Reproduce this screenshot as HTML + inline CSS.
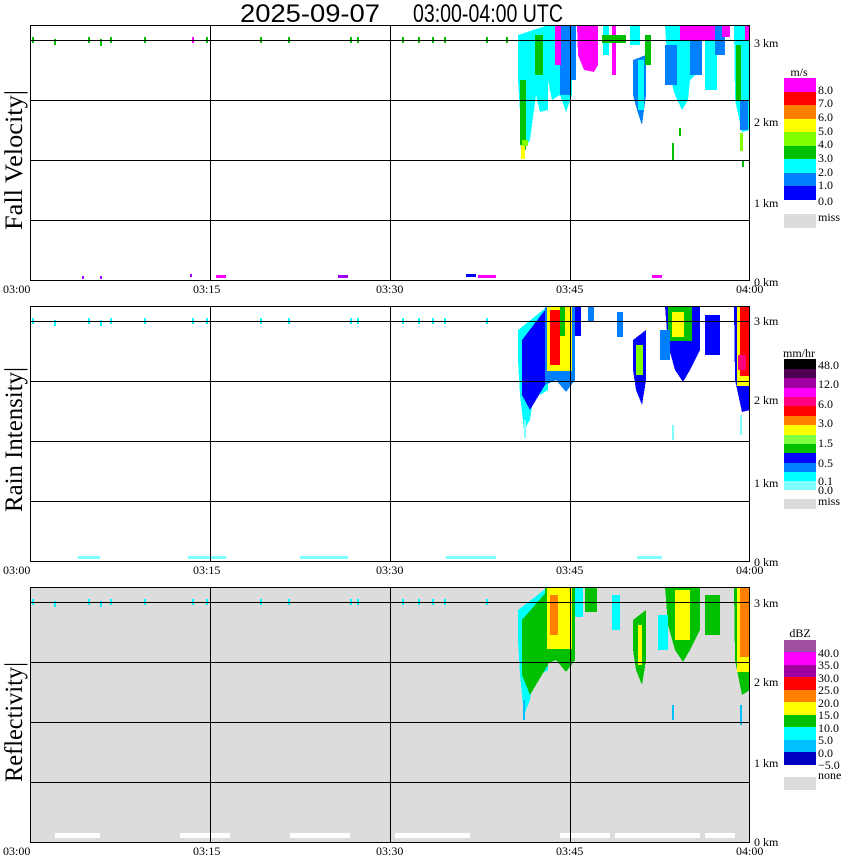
<!DOCTYPE html>
<html><head><meta charset="utf-8"><style>
html,body{margin:0;padding:0;background:#fff;width:850px;height:868px;overflow:hidden}
svg{display:block}
.t{font-family:"Liberation Serif",serif;font-size:12px;fill:#000}
.lg{font-family:"Liberation Serif",serif;font-size:12px;fill:#000}
.yl{font-family:"Liberation Serif",serif;font-size:25px;fill:#000}
</style></head><body>
<svg width="850" height="868" viewBox="0 0 850 868" xmlns="http://www.w3.org/2000/svg" shape-rendering="crispEdges">
<text x="240" y="22" font-family="Liberation Sans,sans-serif" font-size="25" textLength="140" lengthAdjust="spacingAndGlyphs">2025-09-07</text>
<text x="413" y="22" font-family="Liberation Sans,sans-serif" font-size="25" textLength="150" lengthAdjust="spacingAndGlyphs">03:00-04:00 UTC</text>

<!-- PANEL 3 gray background -->
<rect x="30" y="587" width="720" height="255" fill="#dcdcdc"/>
<g fill="#fff">
<rect x="55" y="833" width="45" height="5"/><rect x="180" y="833" width="50" height="5"/><rect x="290" y="833" width="60" height="5"/>
<rect x="395" y="833" width="75" height="5"/><rect x="560" y="833" width="50" height="5"/><rect x="615" y="833" width="85" height="5"/><rect x="705" y="833" width="30" height="5"/>
</g>

<!-- PANEL 1 data -->
<g>
<polygon fill="#00ffff" points="518,35 548,25 548,110 540,112 536,95 530,140 524,150 520,112 518,80"/>
<polygon fill="#00c000" points="520,80 526,80 526,150 520,145"/>
<rect x="521" y="145" width="4" height="14" fill="#ffff00"/>
<rect x="522" y="140" width="6" height="6" fill="#80ff00"/>
<polygon fill="#00ffff" points="548,25 572,25 572,95 566,112 560,95 552,100 548,80"/>
<rect x="560" y="25" width="10" height="70" fill="#0080ff"/>
<rect x="535" y="35" width="8" height="40" fill="#00c000"/>
<rect x="555" y="25" width="6" height="40" fill="#ff00ff"/>
<rect x="570" y="25" width="6" height="55" fill="#0080ff"/>
<polygon fill="#ff00ff" points="577,25 598,25 598,65 594,72 584,70 578,55"/>
<rect x="603" y="25" width="6" height="30" fill="#00ffff"/>
<rect x="612" y="25" width="4" height="50" fill="#ff00ff"/>
<polygon fill="#0080ff" points="633,60 646,55 646,95 642,125 637,110 633,95"/>
<rect x="638" y="60" width="6" height="50" fill="#00ffff"/>
<rect x="630" y="25" width="10" height="20" fill="#00ffff"/>
<rect x="645" y="35" width="6" height="30" fill="#00c000"/>
<polygon fill="#00ffff" points="665,25 700,25 700,70 690,80 688,100 682,110 675,95 668,70"/>
<rect x="665" y="45" width="12" height="40" fill="#0080ff"/>
<rect x="690" y="35" width="12" height="40" fill="#0080ff"/>
<rect x="680" y="25" width="35" height="15" fill="#ff00ff"/>
<rect x="705" y="40" width="12" height="50" fill="#00ffff"/>
<rect x="715" y="25" width="10" height="30" fill="#0080ff"/>
<rect x="722" y="25" width="8" height="12" fill="#ff00ff"/>
<polygon fill="#00ffff" points="734,25 750,25 750,130 742,132 735,100"/>
<rect x="736" y="45" width="5" height="55" fill="#00c000"/>
<rect x="740" y="100" width="8" height="30" fill="#0080ff"/>
<rect x="745" y="25" width="5" height="15" fill="#ff00ff"/>
<rect x="740" y="133" width="3" height="18" fill="#80ff00"/>
<rect x="742" y="160" width="2" height="7" fill="#00c000"/>
<rect x="672" y="143" width="2" height="17" fill="#00c000"/>
<rect x="679" y="128" width="2" height="8" fill="#00c000"/>
<rect x="602" y="35" width="24" height="8" fill="#00c000"/>
</g>

<!-- PANEL 2 data -->
<g>
<polygon fill="#00ffff" points="518,330 548,306 548,390 540,395 536,380 530,420 524,430 520,395 518,360"/>
<polygon fill="#0000ff" points="522,340 545,310 545,385 530,410 522,395"/>
<polygon fill="#0080ff" points="545,306 575,306 575,380 566,392 556,380 545,385"/>
<rect x="547" y="306" width="25" height="65" fill="#ffff00"/>
<rect x="550" y="310" width="10" height="55" fill="#ff0000"/>
<rect x="560" y="306" width="5" height="30" fill="#00c000"/>
<rect x="575" y="306" width="6" height="30" fill="#0000ff"/>
<rect x="588" y="306" width="6" height="16" fill="#0080ff"/>
<rect x="617" y="312" width="6" height="25" fill="#0080ff"/>
<polygon fill="#0000ff" points="633,340 646,330 646,380 642,405 636,390 633,370"/>
<rect x="636" y="345" width="7" height="30" fill="#80ff00"/>
<polygon fill="#0000ff" points="665,306 700,306 700,350 690,370 683,382 675,370 668,345"/>
<rect x="668" y="306" width="24" height="35" fill="#00c000"/>
<rect x="672" y="312" width="12" height="25" fill="#ffff00"/>
<rect x="705" y="315" width="15" height="40" fill="#0000ff"/>
<rect x="660" y="330" width="10" height="30" fill="#0080ff"/>
<polygon fill="#0000ff" points="734,306 750,306 750,410 742,412 735,380"/>
<rect x="737" y="306" width="13" height="80" fill="#ffff00"/>
<rect x="740" y="306" width="10" height="70" fill="#ff0000"/>
<rect x="738" y="355" width="8" height="15" fill="#ff0080"/>
<rect x="672" y="425" width="2" height="15" fill="#80ffff"/>
<rect x="740" y="415" width="2" height="20" fill="#80ffff"/>
<rect x="524" y="420" width="2" height="18" fill="#80ffff"/>
</g>

<!-- PANEL 3 data -->
<g>
<polygon fill="#00ffff" points="518,610 548,587 548,670 540,675 536,660 530,700 524,715 520,675 518,640"/>
<polygon fill="#00c000" points="522,620 548,590 548,665 530,695 522,675"/>
<polygon fill="#00c000" points="545,587 575,587 575,660 566,672 556,660 545,665"/>
<rect x="547" y="587" width="25" height="62" fill="#ffff00"/>
<rect x="550" y="595" width="8" height="40" fill="#ff8000"/>
<rect x="575" y="587" width="8" height="30" fill="#00ffff"/>
<rect x="585" y="587" width="12" height="25" fill="#00c000"/>
<rect x="612" y="595" width="8" height="35" fill="#00ffff"/>
<polygon fill="#00c000" points="633,620 646,610 646,660 642,685 636,670 633,650"/>
<rect x="638" y="625" width="4" height="40" fill="#ffff00"/>
<polygon fill="#00c000" points="665,587 700,587 700,630 690,650 683,662 675,650 668,625"/>
<rect x="675" y="590" width="15" height="50" fill="#ffff00"/>
<rect x="658" y="615" width="10" height="35" fill="#00ffff"/>
<rect x="705" y="595" width="15" height="40" fill="#00c000"/>
<polygon fill="#00c000" points="734,587 750,587 750,690 742,695 735,660"/>
<rect x="737" y="587" width="13" height="85" fill="#ffff00"/>
<rect x="740" y="587" width="10" height="70" fill="#ff8000"/>
<rect x="672" y="705" width="2" height="15" fill="#00c0ff"/>
<rect x="740" y="705" width="2" height="20" fill="#00c0ff"/>
<rect x="523" y="700" width="2" height="20" fill="#00c0ff"/>
</g>

<!-- tick marks near 3km -->
<g>
<g fill="#00c000">
<rect x="32" y="37" width="2" height="6"/><rect x="54" y="39" width="2" height="6"/><rect x="88" y="37" width="2" height="6"/><rect x="100" y="39" width="2" height="7"/><rect x="110" y="37" width="2" height="6"/><rect x="144" y="37" width="2" height="6"/><rect x="206" y="37" width="2" height="6"/><rect x="260" y="37" width="2" height="6"/><rect x="288" y="37" width="2" height="6"/><rect x="350" y="37" width="2" height="6"/><rect x="357" y="37" width="2" height="6"/><rect x="402" y="37" width="2" height="6"/><rect x="418" y="37" width="2" height="6"/><rect x="432" y="37" width="2" height="6"/><rect x="444" y="37" width="2" height="6"/><rect x="486" y="37" width="2" height="6"/><rect x="506" y="37" width="2" height="6"/>
</g>
<rect x="192" y="37" width="2" height="6" fill="#ff00ff"/>
<g fill="#00ffff">
<rect x="32" y="318" width="2" height="6"/><rect x="54" y="320" width="2" height="6"/><rect x="88" y="318" width="2" height="6"/><rect x="100" y="320" width="2" height="6"/><rect x="110" y="318" width="2" height="6"/><rect x="144" y="318" width="2" height="6"/><rect x="192" y="318" width="2" height="6"/><rect x="206" y="318" width="2" height="6"/><rect x="260" y="318" width="2" height="6"/><rect x="288" y="318" width="2" height="6"/><rect x="350" y="318" width="2" height="6"/><rect x="357" y="318" width="2" height="6"/><rect x="402" y="318" width="2" height="6"/><rect x="418" y="318" width="2" height="6"/><rect x="432" y="318" width="2" height="6"/><rect x="444" y="318" width="2" height="6"/><rect x="486" y="318" width="2" height="6"/>
<rect x="32" y="599" width="2" height="6"/><rect x="54" y="601" width="2" height="6"/><rect x="88" y="599" width="2" height="6"/><rect x="100" y="601" width="2" height="6"/><rect x="110" y="599" width="2" height="6"/><rect x="144" y="599" width="2" height="6"/><rect x="192" y="599" width="2" height="6"/><rect x="206" y="599" width="2" height="6"/><rect x="260" y="599" width="2" height="6"/><rect x="288" y="599" width="2" height="6"/><rect x="350" y="599" width="2" height="6"/><rect x="357" y="599" width="2" height="6"/><rect x="402" y="599" width="2" height="6"/><rect x="418" y="599" width="2" height="6"/><rect x="432" y="599" width="2" height="6"/><rect x="444" y="599" width="2" height="6"/><rect x="486" y="599" width="2" height="6"/>
</g>
<g fill="#80ffff">
<rect x="78" y="556" width="22" height="3"/><rect x="188" y="556" width="38" height="3"/><rect x="300" y="556" width="48" height="3"/><rect x="446" y="556" width="50" height="3"/><rect x="637" y="556" width="25" height="3"/>
</g>
<g fill="#a000ff">
<rect x="82" y="276" width="2" height="3"/><rect x="100" y="276" width="2" height="3"/><rect x="190" y="274" width="2" height="3"/><rect x="216" y="275" width="10" height="3" fill="#ff00ff"/><rect x="338" y="275" width="10" height="3"/><rect x="466" y="274" width="10" height="3" fill="#0000ff"/><rect x="478" y="275" width="18" height="3" fill="#ff00ff"/><rect x="652" y="275" width="10" height="3" fill="#ff00ff"/>
</g>
</g>

<!-- frames and grid -->
<g fill="none" stroke="#000" stroke-width="1">
<rect x="30.5" y="25.5" width="719" height="255"/>
<path d="M30 40.5H750M30 100.5H750M30 160.5H750M30 220.5H750M210.5 25V280M390.5 25V280M570.5 25V280"/>
<rect x="30.5" y="306.5" width="719" height="255"/>
<path d="M30 321.5H750M30 381.5H750M30 441.5H750M30 501.5H750M210.5 306V561M390.5 306V561M570.5 306V561"/>
<rect x="30.5" y="587.5" width="719" height="255"/>
<path d="M30 602.5H750M30 662.5H750M30 722.5H750M30 782.5H750M210.5 587V842M390.5 587V842M570.5 587V842"/>
</g>

<!-- axis labels -->
<g class="t">
<text x="3" y="293">03:00</text><text x="193" y="293">03:15</text><text x="376" y="293">03:30</text><text x="556" y="293">03:45</text><text x="736" y="293">04:00</text>
<text x="3" y="574">03:00</text><text x="193" y="574">03:15</text><text x="376" y="574">03:30</text><text x="556" y="574">03:45</text><text x="736" y="574">04:00</text>
<text x="3" y="855">03:00</text><text x="193" y="855">03:15</text><text x="376" y="855">03:30</text><text x="556" y="855">03:45</text><text x="736" y="855">04:00</text>
<text x="754" y="47">3 km</text><text x="754" y="126">2 km</text><text x="754" y="207">1 km</text><text x="754" y="286">0 km</text>
<text x="754" y="325">3 km</text><text x="754" y="404">2 km</text><text x="754" y="487">1 km</text><text x="754" y="566">0 km</text>
<text x="754" y="607">3 km</text><text x="754" y="686">2 km</text><text x="754" y="767">1 km</text><text x="754" y="846">0 km</text>
</g>
<text class="yl" transform="translate(22,230) rotate(-90)" textLength="140" lengthAdjust="spacingAndGlyphs">Fall Velocity|</text>
<text class="yl" transform="translate(22,512) rotate(-90)" textLength="145" lengthAdjust="spacingAndGlyphs">Rain Intensity|</text>
<text class="yl" transform="translate(22,782) rotate(-90)" textLength="120" lengthAdjust="spacingAndGlyphs">Reflectivity|</text>

<!-- legend 1 -->
<g>
<text class="lg" x="799" y="76" text-anchor="middle" font-size="11">m/s</text>
<rect x="784" y="78" width="32" height="14" fill="#ff00ff"/>
<rect x="784" y="92" width="32" height="13" fill="#ff0000"/>
<rect x="784" y="105" width="32" height="14" fill="#ff8000"/>
<rect x="784" y="119" width="32" height="13" fill="#ffff00"/>
<rect x="784" y="132" width="32" height="14" fill="#80ff00"/>
<rect x="784" y="146" width="32" height="13" fill="#00c000"/>
<rect x="784" y="159" width="32" height="14" fill="#00ffff"/>
<rect x="784" y="173" width="32" height="13" fill="#0080ff"/>
<rect x="784" y="186" width="32" height="14" fill="#0000ff"/>
<rect x="784" y="214" width="32" height="14" fill="#dcdcdc"/>
<g class="lg" font-size="11"><text x="818" y="94">8.0</text><text x="818" y="107">7.0</text><text x="818" y="121">6.0</text><text x="818" y="135">5.0</text><text x="818" y="148">4.0</text><text x="818" y="162">3.0</text><text x="818" y="176">2.0</text><text x="818" y="189">1.0</text><text x="818" y="205">0.0</text><text x="818" y="221">miss</text></g>
</g>
<!-- legend 2 -->
<g>
<text class="lg" x="799" y="357" text-anchor="middle" font-size="11">mm/hr</text>
<rect x="784" y="359" width="32" height="10" fill="#000000"/>
<rect x="784" y="369" width="32" height="9" fill="#500050"/>
<rect x="784" y="378" width="32" height="10" fill="#a000a0"/>
<rect x="784" y="388" width="32" height="9" fill="#ff00ff"/>
<rect x="784" y="397" width="32" height="9" fill="#ff0080"/>
<rect x="784" y="406" width="32" height="10" fill="#ff0000"/>
<rect x="784" y="416" width="32" height="9" fill="#ff8000"/>
<rect x="784" y="425" width="32" height="10" fill="#ffff00"/>
<rect x="784" y="435" width="32" height="9" fill="#80ff40"/>
<rect x="784" y="444" width="32" height="9" fill="#00c000"/>
<rect x="784" y="453" width="32" height="10" fill="#0000ff"/>
<rect x="784" y="463" width="32" height="9" fill="#0080ff"/>
<rect x="784" y="472" width="32" height="9" fill="#00ffff"/>
<rect x="784" y="481" width="32" height="9" fill="#80ffff"/>
<rect x="784" y="499" width="32" height="10" fill="#dcdcdc"/>
<g class="lg" font-size="11"><text x="818" y="369">48.0</text><text x="818" y="388">12.0</text><text x="818" y="408">6.0</text><text x="818" y="427">3.0</text><text x="818" y="447">1.5</text><text x="818" y="467">0.5</text><text x="818" y="485">0.1</text><text x="818" y="494">0.0</text><text x="818" y="505">miss</text></g>
</g>
<!-- legend 3 -->
<g>
<text class="lg" x="800" y="637" text-anchor="middle" font-size="11">dBZ</text>
<rect x="784" y="640" width="32" height="12" fill="#a050a0"/>
<rect x="784" y="652" width="32" height="13" fill="#ff00ff"/>
<rect x="784" y="665" width="32" height="12" fill="#a000a0"/>
<rect x="784" y="677" width="32" height="13" fill="#ff0000"/>
<rect x="784" y="690" width="32" height="12" fill="#ff8000"/>
<rect x="784" y="702" width="32" height="13" fill="#ffff00"/>
<rect x="784" y="715" width="32" height="12" fill="#00c000"/>
<rect x="784" y="727" width="32" height="13" fill="#00ffff"/>
<rect x="784" y="740" width="32" height="12" fill="#00c0ff"/>
<rect x="784" y="752" width="32" height="13" fill="#0000c0"/>
<rect x="784" y="777" width="32" height="13" fill="#dcdcdc"/>
<g class="lg" font-size="11"><text x="818" y="657">40.0</text><text x="818" y="669">35.0</text><text x="818" y="682">30.0</text><text x="818" y="694">25.0</text><text x="818" y="707">20.0</text><text x="818" y="719">15.0</text><text x="818" y="732">10.0</text><text x="818" y="744">5.0</text><text x="818" y="757">0.0</text><text x="818" y="769">−5.0</text><text x="818" y="779">none</text></g>
</g>
</svg>
</body></html>
